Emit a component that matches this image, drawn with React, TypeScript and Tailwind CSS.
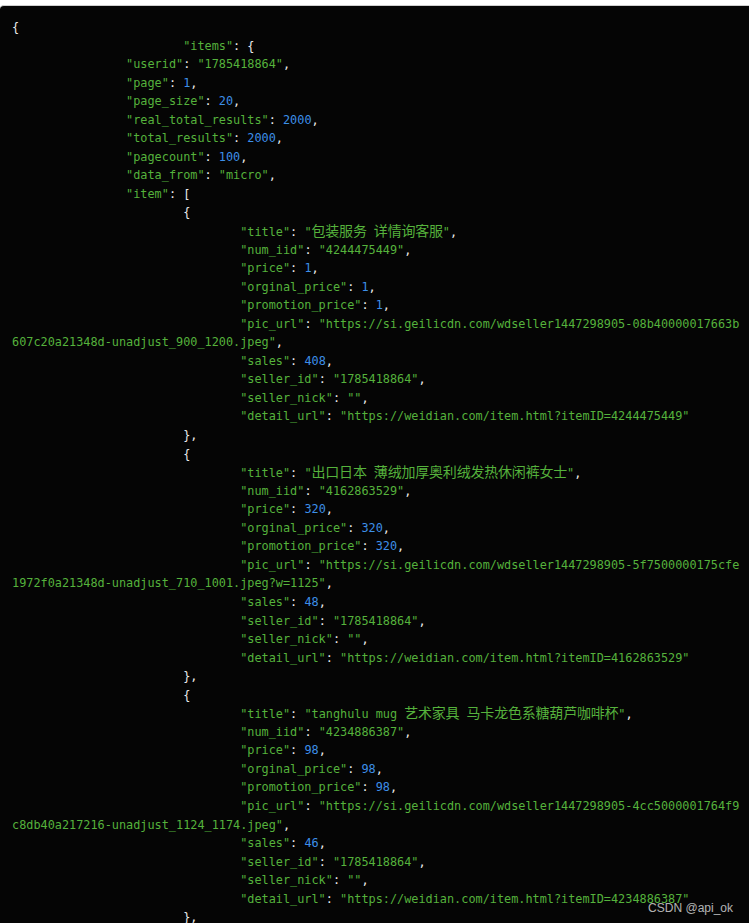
import React from "react";

const T = "        ";
const raw: string[] = [
  "{",
  T + T + T + '"items": {',
  T + T + '"userid": "1785418864",',
  T + T + '"page": 1,',
  T + T + '"page_size": 20,',
  T + T + '"real_total_results": 2000,',
  T + T + '"total_results": 2000,',
  T + T + '"pagecount": 100,',
  T + T + '"data_from": "micro",',
  T + T + '"item": [',
  T + T + T + "{",
  T + T + T + T + '"title": "包装服务 详情询客服",',
  T + T + T + T + '"num_iid": "4244475449",',
  T + T + T + T + '"price": 1,',
  T + T + T + T + '"orginal_price": 1,',
  T + T + T + T + '"promotion_price": 1,',
  T + T + T + T + '"pic_url": "https://si.geilicdn.com/wdseller1447298905-08b40000017663b',
  '\u0001607c20a21348d-unadjust_900_1200.jpeg",',
  T + T + T + T + '"sales": 408,',
  T + T + T + T + '"seller_id": "1785418864",',
  T + T + T + T + '"seller_nick": "",',
  T + T + T + T + '"detail_url": "https://weidian.com/item.html?itemID=4244475449"',
  T + T + T + "},",
  T + T + T + "{",
  T + T + T + T + '"title": "出口日本 薄绒加厚奥利绒发热休闲裤女士",',
  T + T + T + T + '"num_iid": "4162863529",',
  T + T + T + T + '"price": 320,',
  T + T + T + T + '"orginal_price": 320,',
  T + T + T + T + '"promotion_price": 320,',
  T + T + T + T + '"pic_url": "https://si.geilicdn.com/wdseller1447298905-5f7500000175cfe',
  '\u00011972f0a21348d-unadjust_710_1001.jpeg?w=1125",',
  T + T + T + T + '"sales": 48,',
  T + T + T + T + '"seller_id": "1785418864",',
  T + T + T + T + '"seller_nick": "",',
  T + T + T + T + '"detail_url": "https://weidian.com/item.html?itemID=4162863529"',
  T + T + T + "},",
  T + T + T + "{",
  T + T + T + T + '"title": "tanghulu mug 艺术家具 马卡龙色系糖葫芦咖啡杯",',
  T + T + T + T + '"num_iid": "4234886387",',
  T + T + T + T + '"price": 98,',
  T + T + T + T + '"orginal_price": 98,',
  T + T + T + T + '"promotion_price": 98,',
  T + T + T + T + '"pic_url": "https://si.geilicdn.com/wdseller1447298905-4cc5000001764f9',
  '\u0001c8db40a217216-unadjust_1124_1174.jpeg",',
  T + T + T + T + '"sales": 46,',
  T + T + T + T + '"seller_id": "1785418864",',
  T + T + T + T + '"seller_nick": "",',
  T + T + T + T + '"detail_url": "https://weidian.com/item.html?itemID=4234886387"',
  T + T + T + "},",
];

function renderStr(s: string, key: string) {
  const parts = s.split(/([\u4e00-\u9fff]+)/);
  return (
    <span key={key} className="text-[#55b23c]">
      {parts.map((p, i) =>
        /[\u4e00-\u9fff]/.test(p) ? (
          <span key={i} className="text-[14px] tracking-[-0.2px]">
            {p}
          </span>
        ) : (
          p
        )
      )}
    </span>
  );
}

function renderLine(line: string, idx: number) {
  const out: React.ReactNode[] = [];
  let s = line;
  let k = 0;
  if (s.startsWith("\u0001")) {
    s = s.slice(1);
    const q = s.indexOf('"');
    out.push(renderStr(s.slice(0, q + 1), "c" + k++));
    s = s.slice(q + 1);
  }
  const re = /("[^"]*"?)|(-?\d+)|([^"\d]+)/g;
  let m: RegExpExecArray | null;
  while ((m = re.exec(s)) !== null) {
    if (m[1] !== undefined) out.push(renderStr(m[1], "s" + k++));
    else if (m[2] !== undefined)
      out.push(
        <span key={"n" + k++} className="text-[#3d8fe8]">
          {m[2]}
        </span>
      );
    else
      out.push(
        <span key={"p" + k++} className="text-[#ececec]">
          {m[3]}
        </span>
      );
  }
  return (
    <div key={idx} className="h-[18.55px] leading-[18.55px] whitespace-pre">
      {out}
    </div>
  );
}

export default function App() {
  return (
    <div className="h-[923px] w-[749px] bg-white pt-[5px] overflow-hidden">
      <div className="relative h-full w-full bg-[#050505] rounded-tl-[4px] border-t border-[#cfcfcf] overflow-hidden">
        <div
          className="pl-[12px] pt-[12px] text-[11.85px]"
          style={{ fontFamily: '"DejaVu Sans Mono", "Liberation Mono", "Noto Sans CJK SC", monospace' }}
        >
          {raw.map((l, i) => renderLine(l, i))}
        </div>
        <div
          className="absolute right-[16px] bottom-[6px] text-[12px] text-[#e0e0e0]/80"
          style={{ fontFamily: '"Liberation Sans", Arial, sans-serif' }}
        >
          CSDN @api_ok
        </div>
      </div>
    </div>
  );
}
